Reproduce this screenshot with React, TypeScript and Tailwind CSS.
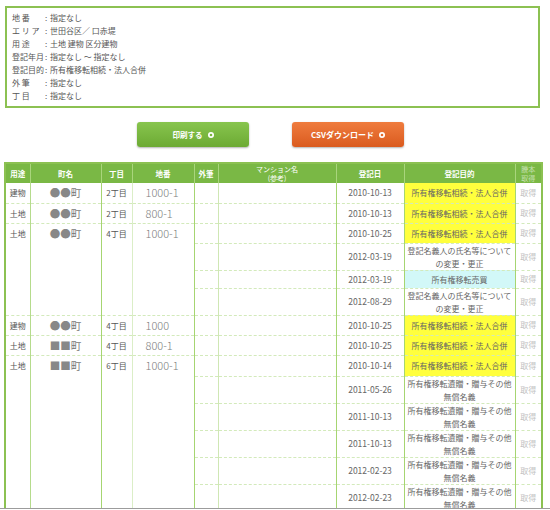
import React from 'react';

type Row = {
  use?: string;
  town?: string;
  chome?: string;
  lot?: string;
  span?: number;
  date: string;
  purpose: string[];
  kind: 'yellow' | 'cyan' | 'plain';
  h: string;
};

const SOUZOKU = ['所有権移転相続・法人合併'];
const HENKOU = ['登記名義人の氏名等について', 'の変更・更正'];
const IZOU = ['所有権移転遺贈・贈与その他', '無償名義'];

const rows: Row[] = [
  { use: '建物', town: '●●', chome: '2丁目', lot: '1000-1', date: '2010-10-13', purpose: SOUZOKU, kind: 'yellow', h: 'h-[20px]' },
  { use: '土地', town: '●●', chome: '2丁目', lot: '800-1', date: '2010-10-13', purpose: SOUZOKU, kind: 'yellow', h: 'h-[20px]' },
  { use: '土地', town: '●●', chome: '4丁目', lot: '1000-1', span: 4, date: '2010-10-25', purpose: SOUZOKU, kind: 'yellow', h: 'h-[20px]' },
  { date: '2012-03-19', purpose: HENKOU, kind: 'plain', h: 'h-[27px]' },
  { date: '2012-03-19', purpose: ['所有権移転売買'], kind: 'cyan', h: 'h-[18px]' },
  { date: '2012-08-29', purpose: HENKOU, kind: 'plain', h: 'h-[26px]' },
  { use: '建物', town: '●●', chome: '4丁目', lot: '1000', date: '2010-10-25', purpose: SOUZOKU, kind: 'yellow', h: 'h-[20px]' },
  { use: '土地', town: '■■', chome: '4丁目', lot: '800-1', date: '2010-10-25', purpose: SOUZOKU, kind: 'yellow', h: 'h-[20px]' },
  { use: '土地', town: '■■', chome: '6丁目', lot: '1000-1', span: 7, date: '2010-10-14', purpose: SOUZOKU, kind: 'yellow', h: 'h-[21px]' },
  { date: '2011-05-26', purpose: IZOU, kind: 'plain', h: 'h-[26px]' },
  { date: '2011-10-13', purpose: IZOU, kind: 'plain', h: 'h-[26px]' },
  { date: '2011-10-13', purpose: IZOU, kind: 'plain', h: 'h-[26px]' },
  { date: '2012-02-23', purpose: IZOU, kind: 'plain', h: 'h-[26px]' },
  { date: '2012-02-23', purpose: IZOU, kind: 'plain', h: 'h-[26px]' },
  { date: '2012-03-01', purpose: IZOU, kind: 'plain', h: 'h-[26px]' },
];

const conditions = [
  ['地 番', '指定なし'],
  ['エ リ ア', '世田谷区／ 口赤堤'],
  ['用 途', '土地 建物 区分建物'],
  ['登記年月', '指定なし 〜 指定なし'],
  ['登記目的', '所有権移転相続・法人合併'],
  ['外 筆', '指定なし'],
  ['丁 目', '指定なし'],
];

const purposeBg = {
  yellow: 'bg-[#ffff3d]',
  cyan: 'bg-[#d2f8f8]',
  plain: 'bg-white',
};

function Dot({ color }: { color: string }) {
  return (
    <svg width="6" height="6" viewBox="0 0 6 6" className="ml-[5px]">
      <circle cx="3" cy="3" r="3" fill="#ffffff" />
      <circle cx="3" cy="3" r="1.3" fill={color} />
    </svg>
  );
}

export default function App() {
  return (
    <div className="relative w-[550px] h-[510px] overflow-hidden bg-white font-['Noto_Sans_CJK_JP','Noto_Sans',sans-serif] text-[#555]">
      <div className="ml-[5px] mt-[6px] w-[535px] h-[102px] border-2 border-[#8cc152] pl-[5px] pt-[3px] text-[8px] leading-[13px]">
        {conditions.map(([label, value]) => (
          <div key={label} className="flex whitespace-nowrap">
            <span className="w-[33px]">{label}</span>
            <span className="w-[5px]">:</span>
            <span>{value}</span>
          </div>
        ))}
      </div>

      <div className="flex gap-[43px] pl-[137px] mt-[14px]">
        <button className="flex items-center justify-center w-[112px] h-[25px] rounded-[3px] bg-linear-to-b from-[#88c54e] to-[#6caa33] shadow-[0_1px_2px_rgba(0,0,0,0.3)] text-white text-[7.5px] font-bold">
          印刷する
          <Dot color="#78b640" />
        </button>
        <button className="flex items-center justify-center w-[112px] h-[25px] rounded-[3px] bg-linear-to-b from-[#ef7c3e] to-[#da5a1d] shadow-[0_1px_2px_rgba(0,0,0,0.3)] text-white text-[8px] font-bold">
          CSVダウンロード
          <Dot color="#e46a2c" />
        </button>
      </div>

      <table className="mt-[15px] ml-[4px] w-[537px] table-fixed border-collapse border-2 border-[#8cc152]">
        <colgroup>
          <col className="w-[25px]" />
          <col className="w-[71px]" />
          <col className="w-[31px]" />
          <col className="w-[62px]" />
          <col className="w-[24px]" />
          <col className="w-[118px]" />
          <col className="w-[68px]" />
          <col className="w-[111px]" />
          <col className="w-[27px]" />
        </colgroup>
        <thead>
          <tr className="h-[20px] bg-[#7ab845] text-white text-[7.5px] font-bold leading-[8px]">
            <th className="font-bold border-r border-r-[#a9d57c]">用途</th>
            <th className="font-bold border-r border-r-[#a9d57c]">町名</th>
            <th className="font-bold border-r border-r-[#a9d57c]">丁目</th>
            <th className="font-bold border-r border-r-[#a9d57c]">地番</th>
            <th className="font-bold border-r border-r-[#a9d57c]">外筆</th>
            <th className="font-normal text-[7px] leading-[9px] border-r border-r-[#a9d57c]">
              マンション名
              <br />
              (参考)
            </th>
            <th className="font-bold border-r border-r-[#a9d57c]">登記日</th>
            <th className="font-bold border-r border-r-[#a9d57c]">登記目的</th>
            <th className="font-normal text-[7px] leading-[9px] text-white/55">
              謄本
              <br />
              取得
            </th>
          </tr>
        </thead>
        <tbody>
          {rows.map((r, i) => (
            <tr key={i} className={`${r.h} border-b border-dashed border-[#d3eabb]`}>
              {r.use && (
                <>
                  <td rowSpan={r.span} className="align-top pt-[4px] text-center text-[8px] leading-[12px] border-r border-[#b5db8c]">
                    {r.use}
                  </td>
                  <td rowSpan={r.span} className="align-top pt-[2px] text-center text-[10.5px] leading-[15px] text-[#888] border-r border-[#a6d571]">
                    {r.town}
                    <span className="text-[#777]">町</span>
                  </td>
                  <td rowSpan={r.span} className="align-top pt-[4px] text-center text-[8px] leading-[12px] text-[#555] border-r border-[#dbeec7]">
                    {r.chome}
                  </td>
                  <td rowSpan={r.span} className="align-top pt-[2px] pl-[13px] text-left text-[11px] leading-[15px] font-light text-[#808080] border-r border-[#a6d571]">
                    {r.lot}
                  </td>
                </>
              )}
              <td className="border-r border-[#cfe7b4]"></td>
              <td className="border-r border-[#a6d571]"></td>
              <td className="text-center text-[8.5px] text-[#666] border-r border-[#a6d571]">{r.date}</td>
              <td className={`text-center text-[8px] leading-[13px] text-[#666] whitespace-nowrap border-r border-[#a6d571] ${purposeBg[r.kind]}`}>
                {r.purpose.map((line, j) => (
                  <div key={j}>{line}</div>
                ))}
              </td>
              <td className="text-center text-[8px] text-[#c2c2c2]">取得</td>
            </tr>
          ))}
        </tbody>
      </table>

      <div className="absolute left-0 top-[508px] w-full h-px bg-[#9c9c9c]" />
      <div className="absolute left-0 top-[509px] w-full h-px bg-white" />
    </div>
  );
}
